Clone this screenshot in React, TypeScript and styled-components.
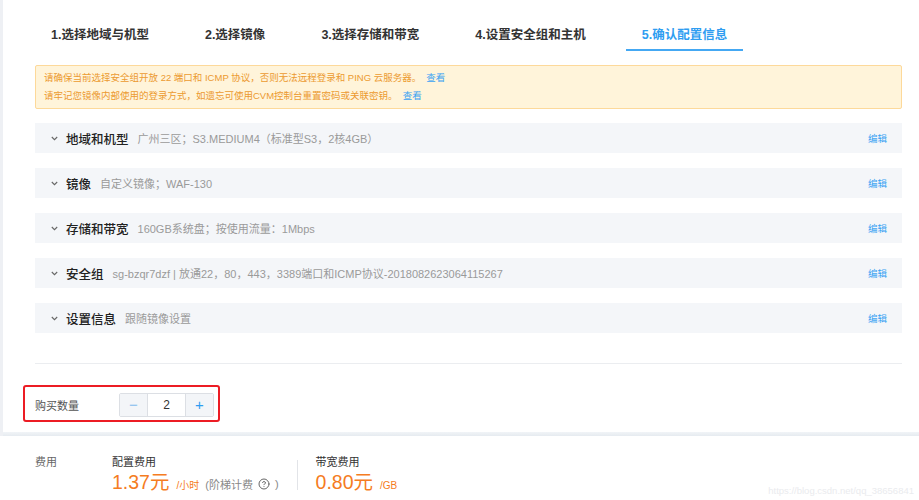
import React from 'react';
import styled, { createGlobalStyle } from 'styled-components';
import { CircleHelp } from 'lucide-react';

const GlobalStyle = createGlobalStyle`
  html, body {
    margin: 0;
    padding: 0;
    background: #fff;
  }
  body {
    font-family: "Liberation Sans", "Noto Sans CJK SC", sans-serif;
    color: #333;
  }
`;

const Page = styled.div`
  display: flex;
  width: 919px;
  height: 500px;
  overflow: hidden;
  position: relative;
`;

const Rail = styled.div`
  width: 3px;
  flex-shrink: 0;
  background: #eef0f4;
`;

const Main = styled.div`
  flex: 1;
  display: flex;
  flex-direction: column;
`;

const Content = styled.div`
  padding: 0 17px 10px 32px;
`;

const Tabs = styled.div`
  display: flex;
  gap: 24px;
`;

const Tab = styled.div<{ $active?: boolean }>`
  padding: 25px 16px 4px;
  line-height: 20px;
  font-size: 12.5px;
  font-weight: bold;
  color: ${(p) => (p.$active ? '#2f9df1' : '#333')};
  border-bottom: 2px solid ${(p) => (p.$active ? '#44a8f3' : 'transparent')};
`;

const Alert = styled.div`
  margin-top: 14px;
  padding: 3px 8px;
  border: 1px solid #fdd99a;
  border-radius: 2px;
  background: #fff4da;
  color: #ec9a30;
  font-size: 9.5px;
  line-height: 18px;
`;

const Link = styled.a`
  color: #3aa2f3;
  margin-left: 5px;
  cursor: pointer;
`;

const Sections = styled.div`
  margin-top: 14px;
  display: flex;
  flex-direction: column;
  gap: 15px;
`;

const Row = styled.div`
  height: 30px;
  display: flex;
  align-items: center;
  padding: 0 15px 0 16px;
  background: #f4f6f9;
`;

const Chevron = styled.svg`
  width: 7px;
  height: 5px;
  margin-right: 8px;
  flex-shrink: 0;
`;

const RowTitle = styled.span`
  font-size: 12.5px;
  font-weight: 500;
  color: #222;
  margin-right: 9px;
`;

const RowValue = styled.span`
  flex: 1;
  font-size: 11px;
  color: #9a9a9a;
  white-space: nowrap;
`;

const EditLink = styled.a`
  font-size: 9.5px;
  color: #3aa2f3;
  cursor: pointer;
`;

const Divider = styled.div`
  margin-top: 30px;
  height: 1px;
  background: #ebedf0;
`;

const QuantityBox = styled.div`
  margin: 21px 0 0 -12px;
  width: fit-content;
  display: flex;
  align-items: center;
  padding: 6px 4px 3px 10px;
  border: 2px solid #ec1c24;
  border-radius: 3px;
`;

const QuantityLabel = styled.span`
  width: 84px;
  font-size: 11px;
  color: #555;
`;

const Stepper = styled.div`
  display: flex;
  height: 22px;
  border: 1px solid #dcdfe4;
  border-radius: 2px;
`;

const StepButton = styled.button<{ $tone: string }>`
  width: 27px;
  padding: 0;
  border: none;
  background: #f3f5f8;
  color: ${(p) => p.$tone};
  font-size: 15px;
  line-height: 20px;
  font-family: "Liberation Sans", sans-serif;
`;

const StepInput = styled.div`
  width: 37px;
  display: flex;
  align-items: center;
  justify-content: center;
  border-left: 1px solid #dcdfe4;
  border-right: 1px solid #dcdfe4;
  background: #fff;
  font-size: 12px;
  color: #333;
`;

const Shade = styled.div`
  height: 4px;
  background: linear-gradient(#f1f4f7, #e6ebf0);
`;

const FeeBar = styled.div`
  flex: 1;
  display: flex;
  align-items: flex-start;
  padding: 18px 0 0 32px;
  margin-left: -3px;
  background: #fff;
`;

const FeeLabel = styled.div`
  width: 77px;
  font-size: 11px;
  line-height: 16px;
  color: #666;
  padding-left: 3px;
`;

const FeeColumn = styled.div`
  display: flex;
  flex-direction: column;
`;

const FeeTitle = styled.div`
  font-size: 11px;
  line-height: 16px;
  color: #333;
`;

const PriceLine = styled.div`
  display: flex;
  align-items: baseline;
  white-space: nowrap;
`;

const Price = styled.span`
  font-size: 19.5px;
  line-height: 24px;
  color: #f57c22;
`;

const Unit = styled.span`
  font-size: 10px;
  color: #f57c22;
  margin-left: 7px;
`;

const Note = styled.span`
  display: inline-flex;
  align-items: center;
  gap: 5px;
  font-size: 11px;
  color: #888;
  margin-left: 6px;
`;

const VLine = styled.div`
  width: 1px;
  height: 30px;
  margin: 6px 18px 0 18px;
  background: #e2e4e8;
`;

const Watermark = styled.div`
  position: absolute;
  right: 5px;
  bottom: 4px;
  font-size: 9.5px;
  color: #eaebee;
`;

const tabs = ['1.选择地域与机型', '2.选择镜像', '3.选择存储和带宽', '4.设置安全组和主机', '5.确认配置信息'];

const sections = [
  { title: '地域和机型', value: '广州三区；S3.MEDIUM4（标准型S3，2核4GB）' },
  { title: '镜像', value: '自定义镜像；WAF-130' },
  { title: '存储和带宽', value: '160GB系统盘；按使用流量：1Mbps' },
  { title: '安全组', value: 'sg-bzqr7dzf | 放通22，80，443，3389端口和ICMP协议-2018082623064115267' },
  { title: '设置信息', value: '跟随镜像设置' },
];

export default function App() {
  return (
    <Page>
      <GlobalStyle />
      <Rail />
      <Main>
        <Content>
          <Tabs>
            {tabs.map((t, i) => (
              <Tab key={t} $active={i === tabs.length - 1}>{t}</Tab>
            ))}
          </Tabs>
          <Alert>
            <div>
              请确保当前选择安全组开放 22 端口和 ICMP 协议，否则无法远程登录和 PING 云服务器。
              <Link>查看</Link>
            </div>
            <div>
              请牢记您镜像内部使用的登录方式，如遗忘可使用CVM控制台重置密码或关联密钥。
              <Link>查看</Link>
            </div>
          </Alert>
          <Sections>
            {sections.map((s) => (
              <Row key={s.title}>
                <Chevron viewBox="0 0 7 5">
                  <path d="M0.8 1 L3.5 3.7 L6.2 1" fill="none" stroke="#666" strokeWidth="1.1" />
                </Chevron>
                <RowTitle>{s.title}</RowTitle>
                <RowValue>{s.value}</RowValue>
                <EditLink>编辑</EditLink>
              </Row>
            ))}
          </Sections>
          <Divider />
          <QuantityBox>
            <QuantityLabel>购买数量</QuantityLabel>
            <Stepper>
              <StepButton $tone="#86bdee">−</StepButton>
              <StepInput>2</StepInput>
              <StepButton $tone="#2f9df1">+</StepButton>
            </Stepper>
          </QuantityBox>
        </Content>
        <Shade />
        <FeeBar>
          <FeeLabel>费用</FeeLabel>
          <FeeColumn>
            <FeeTitle>配置费用</FeeTitle>
            <PriceLine>
              <Price>1.37元</Price>
              <Unit>/小时</Unit>
              <Note>
                (阶梯计费
                <CircleHelp size={12} color="#666" strokeWidth={2} />
                )
              </Note>
            </PriceLine>
          </FeeColumn>
          <VLine />
          <FeeColumn>
            <FeeTitle>带宽费用</FeeTitle>
            <PriceLine>
              <Price>0.80元</Price>
              <Unit>/GB</Unit>
            </PriceLine>
          </FeeColumn>
        </FeeBar>
      </Main>
      <Watermark>https://blog.csdn.net/qq_38656841</Watermark>
    </Page>
  );
}
